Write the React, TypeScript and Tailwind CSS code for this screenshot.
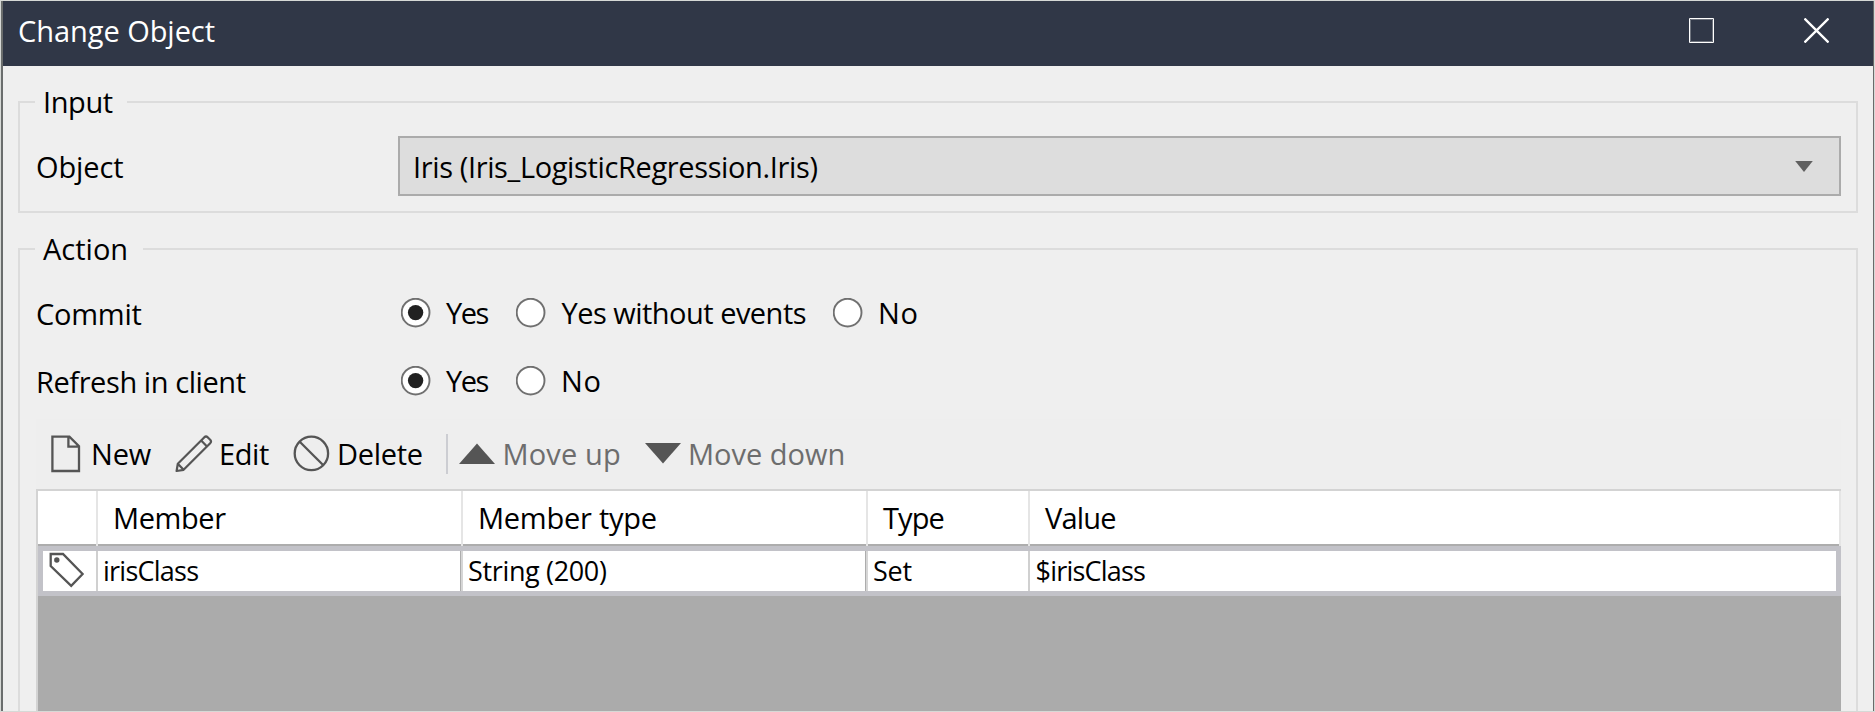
import type { ReactNode } from "react";

const rowLabel = "h-10 w-[363px] shrink-0 whitespace-nowrap pl-px leading-10";

function Group({ title, legendClass, className, children }: { title: string; legendClass: string; className: string; children: ReactNode }) {
  return (
    <fieldset className={`border-2 border-[#dcdcdc] ${className}`}>
      <legend className={`ml-[15px] h-10 whitespace-nowrap leading-10 ${legendClass}`}>{title}</legend>
      {children}
    </fieldset>
  );
}

function Radio({ label, checked = false, className = "", textClass }: { label: string; checked?: boolean; className?: string; textClass: string }) {
  return (
    <div className={`flex h-10 shrink-0 items-center ${className}`}>
      <svg width="30" height="30" viewBox="0 0 30 30" className="shrink-0">
        <circle cx="14.6" cy="14.6" r="13.9" fill="#fff" stroke="#707070" strokeWidth="1.9" />
        {checked && <circle cx="14.6" cy="14.6" r="7.7" fill="#212121" />}
      </svg>
      <span className={`whitespace-nowrap leading-10 ${textClass}`}>{label}</span>
    </div>
  );
}

function Tool({ icon, label, className = "", textClass }: { icon: ReactNode; label: string; className?: string; textClass: string }) {
  return (
    <div className={`flex shrink-0 items-center ${className}`}>
      {icon}
      <span className={`whitespace-nowrap leading-10 ${textClass}`}>{label}</span>
    </div>
  );
}

function HeadCell({ label = "", className }: { label?: string; className: string }) {
  return (
    <>
      <div className={`flex items-center whitespace-nowrap border-b-2 border-[#adadad] bg-white ${className}`}>{label}</div>
      <div className="w-[2px] shrink-0 bg-[#e5e5e5]" />
    </>
  );
}

export default function App() {
  return (
    <div className="flex h-[712px] w-[1875px] flex-col overflow-hidden border border-[#d6d9d6] bg-[#efefef] font-['Open_Sans',sans-serif] text-[29px] text-black">
      <div className="flex min-h-0 flex-1 flex-col border-l-2 border-r border-l-[#6a6d6d] border-r-[#6a6a6a]">
        <header className="flex h-[65px] shrink-0 bg-[#303747] pl-[15px] text-white">
          <h1 className="mt-[10px] h-10 leading-10 tracking-[-0.05px]">Change Object</h1>
          <div className="mr-[44px] mt-[17px] ml-auto flex gap-[90px]">
            <svg width="25" height="25" viewBox="0 0 25 25" fill="none">
              <path d="M1.5 1.5h22v22h-22z" stroke="#70757f" />
              <path d="M.5.5h24v24H.5z" stroke="#fff" />
            </svg>
            <svg width="25" height="25" viewBox="0 0 25 25" fill="none" stroke="#fff" strokeWidth="2.3">
              <path d="M.5.5l24 24M24.5.5l-24 24" />
            </svg>
          </div>
        </header>

        <main className="flex min-h-0 flex-1 flex-col pl-[15px] pr-[15px] pt-4">
          <Group title="Input" legendClass="w-[92px] pl-[8px] tracking-[-0.4px]" className="h-[131px] shrink-0">
            <div className="mt-[14px] flex items-center pl-[15px] pr-[15px]">
              <span className={`${rowLabel} mt-px tracking-[-0.1px]`}>Object</span>
              <div className="flex h-[60px] flex-1 items-center justify-between border-2 border-[#ababab] bg-[#ddd] pl-[13px] pr-[26px]">
                <span className="mt-px whitespace-nowrap leading-10 tracking-[-0.37px]">Iris (Iris_LogisticRegression.Iris)</span>
                <svg width="18" height="11" viewBox="0 0 18 11" className="mt-px">
                  <path d="M.2 0h17.6L9 11z" fill="#606060" />
                </svg>
              </div>
            </div>
          </Group>

          <Group title="Action" legendClass="w-[108px] pl-[8px]" className="mt-4 flex-1 border-b-0">
            <div className="pl-4 pr-[15px]">
              <div className="-ml-px mt-[25px] flex h-10">
                <span className={`${rowLabel} tracking-[-0.25px]`}>Commit</span>
                <div className="-mt-px ml-[3px] flex">
                  <Radio label="Yes" checked className="w-[114.5px]" textClass="ml-[15px] tracking-[-1.5px]" />
                  <Radio label="Yes without events" className="w-[317px]" textClass="ml-[16px] tracking-[-0.52px]" />
                  <Radio label="No" textClass="ml-[15.5px] tracking-[0.6px]" />
                </div>
              </div>
              <div className="-ml-px mt-7 flex h-10">
                <span className={`${rowLabel} tracking-[-0.42px]`}>Refresh in client</span>
                <div className="-mt-px ml-[3px] flex">
                  <Radio label="Yes" checked className="w-[114.5px]" textClass="ml-[15px] tracking-[-1.5px]" />
                  <Radio label="No" textClass="ml-[15.5px] tracking-[0.6px]" />
                </div>
              </div>

              <div className="mt-[17px] flex h-[70px] items-center bg-[#eee] pl-[15px]">
                <Tool
                  label="New"
                  className="w-[124px]"
                  textClass="ml-[10px] tracking-[-0.2px]"
                  icon={
                    <svg width="30" height="38" viewBox="0 0 30 38" fill="none" stroke="#555" strokeWidth="2.3">
                      <path d="M1.4 1.6H18.4L28 11.2V36H1.4zM17.4 1.6V11.6H28" />
                    </svg>
                  }
                />
                <Tool
                  label="Edit"
                  className="w-[118px]"
                  textClass="ml-[6px] tracking-[-0.4px]"
                  icon={
                    <svg width="38" height="38" viewBox="0 0 38 38" fill="none" stroke="#555" strokeWidth="2.2" strokeLinejoin="round">
                      <path d="M1.6 36L2.8 28.8L29.4 2.2Q31 .8 32.6 2.2L35.2 4.8Q36.8 6.6 35.2 8.2L8.6 34.8zM2.8 28.8L8.6 34.8M26.2 5.4L32 11.4" />
                    </svg>
                  }
                />
                <Tool
                  label="Delete"
                  className="w-[153px]"
                  textClass="ml-[7px] tracking-[-0.3px]"
                  icon={
                    <svg width="37" height="38" viewBox="0 0 37 38" fill="none" stroke="#555" strokeWidth="2.3">
                      <circle cx="18.4" cy="18.4" r="16.7" />
                      <path d="M6.5 6.5l23.8 23.8" />
                    </svg>
                  }
                />
                <div className="h-10 w-[2px] bg-[#cccdd2]" />
                <Tool
                  label="Move up"
                  className="ml-[11px] w-[185.5px] text-[#6d6d6d]"
                  textClass="ml-[7.5px] tracking-[0.15px]"
                  icon={
                    <svg width="36" height="22" viewBox="0 0 36 22">
                      <path d="M18 .4L36 21H0z" fill="#555" />
                    </svg>
                  }
                />
                <Tool
                  label="Move down"
                  className="text-[#6d6d6d]"
                  textClass="ml-[7.5px]"
                  icon={
                    <svg width="36" height="22" viewBox="0 0 36 22">
                      <path d="M0 0h36L18 20.6z" fill="#555" />
                    </svg>
                  }
                />
              </div>

              <div className="h-[240px] border-l-2 border-t-2 border-[#d3d3d3] bg-[#ababab]">
                <div className="flex h-[55px]">
                  <HeadCell className="w-[58px]" />
                  <HeadCell label="Member" className="w-[363px] pl-[15px] tracking-[-0.4px]" />
                  <HeadCell label="Member type" className="w-[403px] pl-[15px] tracking-[-0.25px]" />
                  <HeadCell label="Type" className="w-[160px] pl-[15px] tracking-[-0.9px]" />
                  <HeadCell label="Value" className="flex-1 pl-[15px] tracking-[-0.8px]" />
                </div>
                <div className="flex h-[50px] whitespace-nowrap border-[5px] border-[#c2c2c8] bg-white text-[27px] leading-10">
                  <div className="w-[53px] shrink-0 pl-[6px] pt-px">
                    <svg width="37" height="37" viewBox="0 0 37 37" fill="none" stroke="#555" strokeWidth="2.3">
                      <path d="M1.7 2H14L33.6 22L22.2 33.8L1.7 14z" />
                      <circle cx="7.8" cy="8" r="2.7" fill="#555" stroke="none" />
                    </svg>
                  </div>
                  <div className="w-[2px] shrink-0 bg-[#d0d0d0]" />
                  <div className="w-[362px] pl-[5px] tracking-[-0.75px]">irisClass</div>
                  <div className="w-[3px] border-l border-[#adadad] bg-[#d6d6d6]" />
                  <div className="w-[402px] pl-[5px] tracking-[-0.35px]">String (200)</div>
                  <div className="w-[3px] border-l border-[#adadad] bg-[#d6d6d6]" />
                  <div className="w-[160px] pl-[5px] tracking-[-0.2px]">Set</div>
                  <div className="w-[2px] shrink-0 bg-[#d0d0d0]" />
                  <div className="flex-1 pl-[5.5px] tracking-[-0.8px]">$irisClass</div>
                </div>
              </div>
            </div>
          </Group>
        </main>
      </div>
    </div>
  );
}
